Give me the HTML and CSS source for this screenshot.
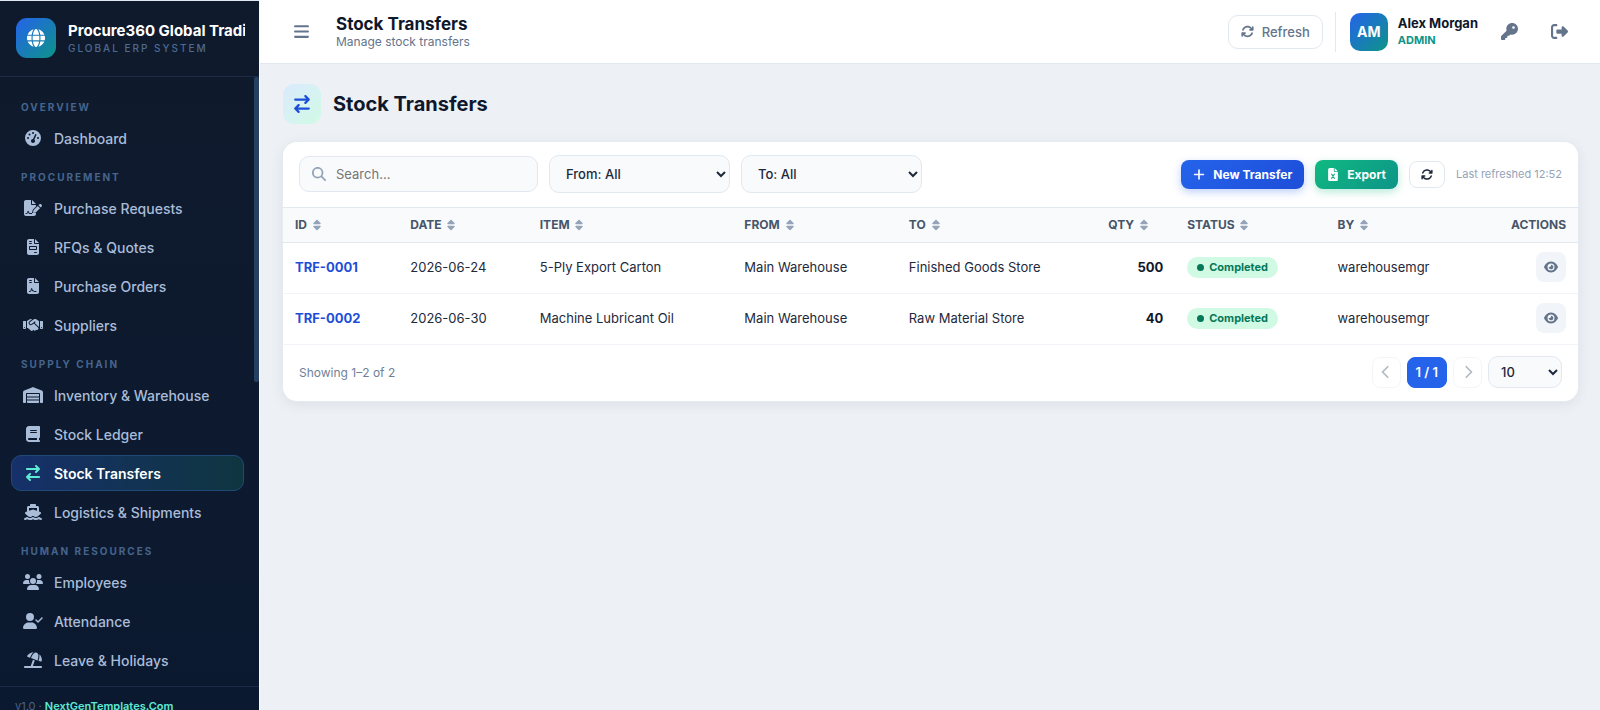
FILE: index.html
```html
<!DOCTYPE html>
<html lang="en">
<head>
    <meta charset="UTF-8">
    <meta name="viewport" content="width=device-width, initial-scale=1.0">
    <title>Stock Transfers</title>
    <link rel="stylesheet" href="styles.css">
</head>
<body>
    <!-- Shared icons -->
    <svg class="sprite" aria-hidden="true">
        <symbol id="i-transfer" viewBox="0 0 448 512"><path d="M438.6 150.6c12.5-12.5 12.5-32.8 0-45.3l-96-96c-12.5-12.5-32.8-12.5-45.3 0s-12.5 32.8 0 45.3L338.7 96 32 96C14.3 96 0 110.3 0 128s14.3 32 32 32l306.7 0-41.4 41.4c-12.5 12.5-12.5 32.8 0 45.3s32.8 12.5 45.3 0l96-96zm-333.3 352c12.5 12.5 32.8 12.5 45.3 0s12.5-32.8 0-45.3L109.3 416 416 416c17.7 0 32-14.3 32-32s-14.3-32-32-32l-306.7 0 41.4-41.4c12.5-12.5 12.5-32.8 0-45.3s-32.8-12.5-45.3 0l-96 96c-12.5 12.5-12.5 32.8 0 45.3l96 96z"/></symbol>
        <symbol id="i-rotate" viewBox="0 0 512 512"><path d="M105.1 202.6c7.7-21.8 20.2-42.3 37.8-59.8c62.5-62.5 163.8-62.5 226.3 0L386.3 160 352 160c-17.7 0-32 14.3-32 32s14.3 32 32 32l111.5 0l.4 0c17.7 0 32-14.3 32-32l0-112c0-17.7-14.3-32-32-32s-32 14.3-32 32l0 35.2L414.4 97.6c-87.5-87.5-229.3-87.5-316.8 0C73.2 122 55.6 150.7 44.8 181.4c-5.9 16.7 2.9 34.9 19.5 40.8s34.9-2.9 40.8-19.5zM39 289.3c-5 1.5-9.8 4.2-13.7 8.2c-4 4-6.7 8.8-8.1 14c-.3 1.2-.6 2.5-.8 3.8c-.3 1.7-.4 3.4-.4 5.1L16 432c0 17.7 14.3 32 32 32s32-14.3 32-32l0-35.1 17.6 17.5c87.5 87.4 229.3 87.4 316.7 0c24.4-24.4 42.1-53.1 52.9-83.8c5.9-16.7-2.9-34.9-19.5-40.8s-34.9 2.9-40.8 19.5c-7.7 21.8-20.2 42.3-37.8 59.8c-62.5 62.5-163.8 62.5-226.3 0l-.1-.1L125.6 352l34.4 0c17.7 0 32-14.3 32-32s-14.3-32-32-32L48.4 288c-1.6 0-3.2 .1-4.8 .3s-3.1 .5-4.6 1z"/></symbol>
        <symbol id="i-sort" viewBox="0 0 320 512"><path d="M137.4 41.4c12.5-12.5 32.8-12.5 45.3 0l128 128c9.2 9.2 11.9 22.9 6.9 34.9s-16.6 19.8-29.6 19.8L32 224c-12.9 0-24.6-7.8-29.6-19.8s-2.2-25.7 6.9-34.9l128-128zm0 429.3l-128-128c-9.2-9.2-11.9-22.9-6.9-34.9s16.6-19.8 29.6-19.8l256 0c12.9 0 24.6 7.8 29.6 19.8s2.2 25.7-6.9 34.9l-128 128c-12.5 12.5-32.8 12.5-45.3 0z"/></symbol>
        <symbol id="i-eye" viewBox="0 0 576 512"><path d="M288 32c-80.8 0-145.5 36.8-192.6 80.6C48.6 156 17.3 208 2.5 243.7c-3.3 7.9-3.3 16.7 0 24.6C17.3 304 48.6 356 95.4 399.4C142.5 443.2 207.2 480 288 480s145.5-36.8 192.6-80.6c46.8-43.5 78.1-95.4 93-131.1c3.3-7.9 3.3-16.7 0-24.6c-14.9-35.7-46.2-87.7-93-131.1C433.5 68.8 368.8 32 288 32zM144 256a144 144 0 1 1 288 0 144 144 0 1 1 -288 0zm144-64c0 35.3-28.7 64-64 64c-7.1 0-13.9-1.2-20.3-3.3c-5.5-1.8-11.9 1.6-11.7 7.4c.3 6.9 1.3 13.8 3.2 20.7c13.7 51.2 66.4 81.6 117.6 67.9s81.6-66.4 67.9-117.6c-11.1-41.5-47.8-69.4-88.6-71.1c-5.8-.2-9.2 6.1-7.4 11.7c2.1 6.4 3.3 13.2 3.3 20.3z"/></symbol>
    </svg>

    <div class="app">
        <aside class="sidebar">
            <div class="brand">
                <div class="brand-logo">
                    <svg class="icon" viewBox="0 0 512 512"><path d="M352 256c0 22.2-1.2 43.6-3.3 64H163.3c-2.2-20.4-3.3-41.8-3.3-64s1.2-43.6 3.3-64H348.7c2.2 20.4 3.3 41.8 3.3 64zm28.8-64H503.9c5.3 20.5 8.1 41.9 8.1 64s-2.8 43.5-8.1 64H380.8c2.1-20.6 3.2-42 3.2-64s-1.1-43.4-3.2-64zm112.6-32H376.7c-10-63.9-29.8-117.4-55.3-151.6c78.3 20.7 142 77.5 171.9 151.6zm-149.1 0H167.7c6.1-36.4 15.5-68.6 27-94.7c10.5-23.6 22.2-40.7 33.5-51.5C239.4 3.2 248.7 0 256 0s16.6 3.2 27.8 13.8c11.3 10.8 23 27.9 33.5 51.5c11.6 26 20.9 58.2 27 94.7zm-209 0H18.6C48.6 85.9 112.2 29.1 190.6 8.4C165.1 42.6 145.3 96.1 135.3 160zM8.1 192H131.2c-2.1 20.6-3.2 42-3.2 64s1.1 43.4 3.2 64H8.1C2.8 299.5 0 278.1 0 256s2.8-43.5 8.1-64zM194.7 446.6c-11.6-26-20.9-58.2-27-94.6H344.3c-6.1 36.4-15.5 68.6-27 94.6c-10.5 23.6-22.2 40.7-33.5 51.5C272.6 508.8 263.3 512 256 512s-16.6-3.2-27.8-13.8c-11.3-10.8-23-27.9-33.5-51.5zM135.3 352c10 63.9 29.8 117.4 55.3 151.6C112.2 482.9 48.6 426.1 18.6 352H135.3zm358.1 0c-30 74.1-93.6 130.9-171.9 151.6c25.5-34.2 45.2-87.7 55.3-151.6H493.4z"/></svg>
                </div>
                <div class="brand-text">
                    <div class="brand-name">Procure360 Global Tradi</div>
                    <div class="brand-sub">GLOBAL ERP SYSTEM</div>
                </div>
            </div>

            <nav class="nav">
                <div class="nav-label">OVERVIEW</div>
                <a href="#" class="nav-item">
                    <svg class="icon" viewBox="0 0 512 512"><path fill-rule="evenodd" d="M0 256a256 256 0 1 1 512 0A256 256 0 1 1 0 256zM288 96a32 32 0 1 0 -64 0 32 32 0 1 0 64 0zM256 416c35.3 0 64-28.7 64-64c0-17.4-6.9-33.1-18.1-44.6L366 161.7c5.3-12.1-.2-26.3-12.3-31.6s-26.3 .2-31.6 12.3L257.9 288c-.6 0-1.3 0-1.9 0c-35.3 0-64 28.7-64 64s28.7 64 64 64zM176 144a32 32 0 1 0 -64 0 32 32 0 1 0 64 0zM96 288a32 32 0 1 0 0-64 32 32 0 1 0 0 64zm352-32a32 32 0 1 0 -64 0 32 32 0 1 0 64 0z"/></svg>
                    Dashboard
                </a>

                <div class="nav-label">PROCUREMENT</div>
                <a href="#" class="nav-item">
                    <svg class="icon" viewBox="0 0 576 512"><path d="M64 0C28.7 0 0 28.7 0 64L0 448c0 35.3 28.7 64 64 64l256 0c35.3 0 64-28.7 64-64l0-32-130 0 28-104L384 205l0-45-128 0c-17.7 0-32-14.3-32-32L224 0 64 0zM256 0l0 128 128 0L256 0zM549.8 139.7c-15.6-15.6-40.9-15.6-56.6 0l-29.4 29.4 71 71 29.4-29.4c15.6-15.6 15.6-40.9 0-56.6l-14.4-14.4zM311.9 321c-4.1 4.1-7 9.2-8.4 14.9l-15 60.1c-1.4 5.5 .2 11.2 4.2 15.2s9.7 5.6 15.2 4.2l60.1-15c5.6-1.4 10.8-4.3 14.9-8.4L512.1 262.7l-71-71L311.9 321z"/><path class="cut" d="M64 432h26c14 0 22-8 26-22l16-54 32 76h80"/></svg>
                    Purchase Requests
                </a>
                <a href="#" class="nav-item">
                    <svg class="icon" viewBox="0 0 384 512"><path fill-rule="evenodd" d="M64 0C28.7 0 0 28.7 0 64L0 448c0 35.3 28.7 64 64 64l256 0c35.3 0 64-28.7 64-64l0-288-128 0c-17.7 0-32-14.3-32-32L224 0 64 0zM256 0l0 128 128 0L256 0zM80 64l64 0c8.8 0 16 7.2 16 16s-7.2 16-16 16L80 96c-8.8 0-16-7.2-16-16s7.2-16 16-16zm0 64l64 0c8.8 0 16 7.2 16 16s-7.2 16-16 16l-64 0c-8.8 0-16-7.2-16-16s7.2-16 16-16zm16 96l192 0c17.7 0 32 14.3 32 32l0 64c0 17.7-14.3 32-32 32L96 352c-17.7 0-32-14.3-32-32l0-64c0-17.7 14.3-32 32-32zm0 32l0 64 192 0 0-64L96 256zM240 416l64 0c8.8 0 16 7.2 16 16s-7.2 16-16 16l-64 0c-8.8 0-16-7.2-16-16s7.2-16 16-16z"/></svg>
                    RFQs &amp; Quotes
                </a>
                <a href="#" class="nav-item">
                    <svg class="icon" viewBox="0 0 384 512"><path fill-rule="evenodd" d="M64 0C28.7 0 0 28.7 0 64L0 448c0 35.3 28.7 64 64 64l256 0c35.3 0 64-28.7 64-64l0-288-128 0c-17.7 0-32-14.3-32-32L224 0 64 0zM256 0l0 128 128 0L256 0zM80 64l64 0c8.8 0 16 7.2 16 16s-7.2 16-16 16L80 96c-8.8 0-16-7.2-16-16s7.2-16 16-16zm0 64l64 0c8.8 0 16 7.2 16 16s-7.2 16-16 16l-64 0c-8.8 0-16-7.2-16-16s7.2-16 16-16z"/><path class="cut" d="M80 432h18c14 0 22-8 26-22l24-76 32 86 18-18c8 18 14 30 30 30h60"/></svg>
                    Purchase Orders
                </a>
                <a href="#" class="nav-item">
                    <svg class="icon" viewBox="0 0 640 512"><path d="M323.4 85.2l-96.8 78.4c-16.1 13-19.2 36.4-7 53.1c12.9 17.8 38 21.3 55.3 7.8l99.3-77.2c7-5.4 17-4.2 22.5 2.8s4.2 17-2.8 22.5l-20.9 16.2L512 316.8 512 128l-.7 0-3.9-2.5L434.8 79c-15.3-9.8-33.2-15-51.4-15c-21.8 0-43 7.5-60 21.2zm22.8 124.4l-51.7 40.2C263 274.3 217.3 268 193.7 235.6c-22.2-30.5-16.6-73.1 12.7-96.8l83.2-67.3c-11.6-4.9-24.1-7.4-36.8-7.4C234 64 215.7 69.6 200 80l-72 48 0 224 28.2 0 91.4 83.4c19.6 17.9 49.9 16.5 67.8-3.1c5.5-6.1 9.2-13.2 11.1-20.6l17 15.6c19.5 17.9 49.9 16.6 67.8-2.9c4.5-4.9 7.8-10.6 9.9-16.5c19.4 13 45.8 10.3 62.1-7.5c17.9-19.5 16.6-49.9-2.9-67.8l-134.2-123zM16 128c-8.8 0-16 7.2-16 16L0 352c0 17.7 14.3 32 32 32l32 0c17.7 0 32-14.3 32-32l0-224-80 0zM48 320a16 16 0 1 1 0 32 16 16 0 1 1 0-32zM544 128l0 224c0 17.7 14.3 32 32 32l32 0c17.7 0 32-14.3 32-32l0-208c0-8.8-7.2-16-16-16l-80 0zm32 208a16 16 0 1 1 32 0 16 16 0 1 1 -32 0z"/></svg>
                    Suppliers
                </a>

                <div class="nav-label">SUPPLY CHAIN</div>
                <a href="#" class="nav-item">
                    <svg class="icon" viewBox="0 0 640 512"><path d="M0 488L0 171.3c0-26.2 15.9-49.7 40.2-59.4L308.1 4.8c7.6-3.1 16.1-3.1 23.8 0L599.8 111.9c24.3 9.7 40.2 33.3 40.2 59.4L640 488c0 13.3-10.7 24-24 24l-48 0c-13.3 0-24-10.7-24-24l0-264c0-17.7-14.3-32-32-32l-384 0c-17.7 0-32 14.3-32 32l0 264c0 13.3-10.7 24-24 24l-48 0c-13.3 0-24-10.7-24-24zm488 24l-336 0c-13.3 0-24-10.7-24-24l0-56 384 0 0 56c0 13.3-10.7 24-24 24zM128 400l0-64 384 0 0 64-384 0zm0-96l0-80 384 0 0 80-384 0z"/></svg>
                    Inventory &amp; Warehouse
                </a>
                <a href="#" class="nav-item">
                    <svg class="icon" viewBox="0 0 448 512"><path fill-rule="evenodd" d="M96 0C43 0 0 43 0 96L0 416c0 53 43 96 96 96l288 0 32 0c17.7 0 32-14.3 32-32s-14.3-32-32-32l0-64c17.7 0 32-14.3 32-32l0-320c0-17.7-14.3-32-32-32L384 0 96 0zm0 384l256 0 0 64L96 448c-17.7 0-32-14.3-32-32s14.3-32 32-32zm32-240c0-8.8 7.2-16 16-16l192 0c8.8 0 16 7.2 16 16s-7.2 16-16 16l-192 0c-8.8 0-16-7.2-16-16zm16 48l192 0c8.8 0 16 7.2 16 16s-7.2 16-16 16l-192 0c-8.8 0-16-7.2-16-16s7.2-16 16-16z"/></svg>
                    Stock Ledger
                </a>
                <a href="#" class="nav-item active">
                    <svg class="icon"><use href="#i-transfer"/></svg>
                    Stock Transfers
                </a>
                <a href="#" class="nav-item">
                    <svg class="icon" viewBox="0 0 576 512"><path fill-rule="evenodd" d="M192 32c0-17.7 14.3-32 32-32L352 0c17.7 0 32 14.3 32 32l0 32 48 0c26.5 0 48 21.5 48 48l0 128 44.4 14.8c23.1 7.7 29.5 37.5 11.5 53.9l-101 92.6c-16.2 9.4-34.7 15.1-50.9 15.1c-19.6 0-40.8-7.7-59.2-20.3c-22.1-15.5-51.6-15.5-73.7 0c-17.1 11.8-38 20.3-59.2 20.3c-16.2 0-34.7-5.7-50.9-15.1l-101-92.6c-18-16.5-11.6-46.2 11.5-53.9L96 240l0-128c0-26.5 21.5-48 48-48l48 0 0-32zM160 218.7l107.8-35.9c13.1-4.4 27.3-4.4 40.5 0L416 218.7l0-90.7-256 0 0 90.7zM306.5 421.9C329 437.4 356.5 448 384 448c26.9 0 55.4-10.8 77.4-26.1c11.9-8.5 28.1-7.8 39.2 1.7c14.4 11.9 32.5 21 50.6 25.2c17.2 4 27.9 21.2 23.9 38.4s-21.2 27.9-38.4 23.9c-24.5-5.7-44.9-16.5-58.2-25C449.5 501.7 417 512 384 512c-31.9 0-60.6-9.9-80.4-18.9c-5.8-2.7-11.1-5.3-15.6-7.7c-4.5 2.4-9.7 5.1-15.6 7.7c-19.8 9-48.5 18.9-80.4 18.9c-33 0-65.5-10.3-94.5-25.8c-13.4 8.4-33.7 19.3-58.2 25c-17.2 4-34.4-6.7-38.4-23.9s6.7-34.4 23.9-38.4c18.1-4.2 36.2-13.3 50.6-25.2c11.1-9.4 27.3-10.1 39.2-1.7C136.7 437.2 165.1 448 192 448c27.5 0 55-10.6 77.5-26.1c11.1-7.9 25.9-7.9 37 0z"/></svg>
                    Logistics &amp; Shipments
                </a>

                <div class="nav-label">HUMAN RESOURCES</div>
                <a href="#" class="nav-item">
                    <svg class="icon" viewBox="0 0 640 512"><path d="M144 0a80 80 0 1 1 0 160A80 80 0 1 1 144 0zM512 0a80 80 0 1 1 0 160A80 80 0 1 1 512 0zM0 298.7C0 239.8 47.8 192 106.7 192l42.7 0c15.9 0 31 3.5 44.6 9.7c-1.3 7.2-1.9 14.7-1.9 22.3c0 38.2 16.8 72.5 43.3 96c-.2 0-.4 0-.7 0L21.3 320C9.6 320 0 310.4 0 298.7zM405.3 320c-.2 0-.4 0-.7 0c26.6-23.5 43.3-57.8 43.3-96c0-7.6-.7-15-1.9-22.3c13.6-6.3 28.7-9.7 44.6-9.7l42.7 0C592.2 192 640 239.8 640 298.7c0 11.8-9.6 21.3-21.3 21.3l-213.3 0zM224 224a96 96 0 1 1 192 0 96 96 0 1 1 -192 0zM128 485.3C128 411.7 187.7 352 261.3 352l117.3 0C452.3 352 512 411.7 512 485.3c0 14.7-11.9 26.7-26.7 26.7l-330.7 0c-14.7 0-26.7-11.9-26.7-26.7z"/></svg>
                    Employees
                </a>
                <a href="#" class="nav-item">
                    <svg class="icon" viewBox="0 0 640 512"><path d="M96 128a128 128 0 1 1 256 0A128 128 0 1 1 96 128zM0 482.3C0 383.8 79.8 304 178.3 304l91.4 0C368.2 304 448 383.8 448 482.3c0 16.4-13.3 29.7-29.7 29.7L29.7 512C13.3 512 0 498.7 0 482.3zM625 177L497 305c-9.4 9.4-24.6 9.4-33.9 0l-64-64c-9.4-9.4-9.4-24.6 0-33.9s24.6-9.4 33.9 0l47 47L591 143c9.4-9.4 24.6-9.4 33.9 0s9.4 24.6 0 33.9z"/></svg>
                    Attendance
                </a>
                <a href="#" class="nav-item">
                    <svg class="icon" viewBox="0 0 576 512"><path d="M346.3 271.8l-60.1-21.9L214 448 32 448c-17.7 0-32 14.3-32 32s14.3 32 32 32l512 0c17.7 0 32-14.3 32-32s-14.3-32-32-32l-261.9 0 64.1-176.2zm121.1-.2l-3.3 9.1 67.7 24.6c18.1 6.6 38-4.2 39.6-23.4c6.5-78.5-23.9-155.5-80.8-208.5c2 8 3.2 16.3 3.4 24.8l.2 6c1.8 57-7.3 113.8-26.8 167.4zM462 99.1c-1.1-34.4-22.5-64.8-54.4-77.4c-.9-.4-1.9-.7-2.8-1.1c-33-11.7-69.8-2.4-93.1 23.8l-4 4.5C272.4 88.3 245 134.2 226.8 184l-3.3 9.1L434 269.7l3.3-9.1c18.1-49.8 26.6-102.5 24.9-155.5l-.2-6zM107.2 112.9c-11.1 15.7-2.8 36.8 15.3 43.4l71 25.8 3.3-9.1c19.5-53.6 49.1-103 87.1-145.5l4-4.5c6.2-6.9 13.1-13 20.5-18.2c-79.6 2.5-154.7 42.2-201.2 108z"/></svg>
                    Leave &amp; Holidays
                </a>
                <div class="nav-thumb"></div>
            </nav>

            <div class="sidebar-footer">v1.0 · <a href="#">NextGenTemplates.Com</a></div>
        </aside>

        <div class="content">
            <header class="topbar">
                <button type="button" class="icon-btn" aria-label="Toggle menu">
                    <svg class="icon" viewBox="0 0 448 512"><path d="M0 96C0 78.3 14.3 64 32 64l384 0c17.7 0 32 14.3 32 32s-14.3 32-32 32L32 128C14.3 128 0 113.7 0 96zM0 256c0-17.7 14.3-32 32-32l384 0c17.7 0 32 14.3 32 32s-14.3 32-32 32L32 288c-17.7 0-32-14.3-32-32zM448 416c0 17.7-14.3 32-32 32L32 448c-17.7 0-32-14.3-32-32s14.3-32 32-32l384 0c17.7 0 32 14.3 32 32z"/></svg>
                </button>
                <div class="topbar-title">
                    <div class="topbar-heading">Stock Transfers</div>
                    <div class="topbar-sub">Manage stock transfers</div>
                </div>
                <button type="button" class="btn-refresh">
                    <svg class="icon"><use href="#i-rotate"/></svg>
                    Refresh
                </button>
                <div class="user">
                    <div class="avatar">AM</div>
                    <div>
                        <div class="user-name">Alex Morgan</div>
                        <div class="user-role">ADMIN</div>
                    </div>
                </div>
                <button type="button" class="icon-btn" aria-label="Change password">
                    <svg class="icon" viewBox="0 0 512 512"><path fill-rule="evenodd" d="M336 352c97.2 0 176-78.8 176-176S433.2 0 336 0S160 78.8 160 176c0 18.7 2.9 36.8 8.3 53.7L7 391c-4.5 4.5-7 10.6-7 17l0 80c0 13.3 10.7 24 24 24l80 0c13.3 0 24-10.7 24-24l0-40 40 0c13.3 0 24-10.7 24-24l0-40 40 0c6.4 0 12.5-2.5 17-7l33.3-33.3c16.9 5.4 35 8.3 53.7 8.3zM376 96a40 40 0 1 1 0 80 40 40 0 1 1 0-80z"/></svg>
                </button>
                <button type="button" class="icon-btn" aria-label="Log out">
                    <svg class="icon" viewBox="0 0 512 512"><path d="M377.9 105.9L500.7 228.7c7.2 7.2 11.3 17.1 11.3 27.3s-4.1 20.1-11.3 27.3L377.9 406.1c-6.4 6.4-15 9.9-24 9.9c-18.7 0-33.9-15.2-33.9-33.9l0-62.1-128 0c-17.7 0-32-14.3-32-32l0-64c0-17.7 14.3-32 32-32l128 0 0-62.1c0-18.7 15.2-33.9 33.9-33.9c9 0 17.6 3.6 24 9.9zM160 96L96 96c-17.7 0-32 14.3-32 32l0 256c0 17.7 14.3 32 32 32l64 0c17.7 0 32 14.3 32 32s-14.3 32-32 32l-64 0c-53 0-96-43-96-96L0 128C0 75 43 32 96 32l64 0c17.7 0 32 14.3 32 32s-14.3 32-32 32z"/></svg>
                </button>
            </header>

            <main class="page">
                <div class="page-header">
                    <div class="page-icon"><svg class="icon"><use href="#i-transfer"/></svg></div>
                    <h1>Stock Transfers</h1>
                </div>

                <section class="card">
                    <div class="toolbar">
                        <label class="search">
                            <svg class="icon" viewBox="0 0 512 512"><path fill-rule="evenodd" d="M416 208c0 45.9-14.9 88.3-40 122.7L502.6 457.4c12.5 12.5 12.5 32.8 0 45.3s-32.8 12.5-45.3 0L330.7 376c-34.4 25.2-76.8 40-122.7 40C93.1 416 0 322.9 0 208S93.1 0 208 0S416 93.1 416 208zM208 352a144 144 0 1 0 0-288 144 144 0 1 0 0 288z"/></svg>
                            <input type="text" placeholder="Search..." aria-label="Search">
                        </label>
                        <select class="filter" aria-label="From warehouse"><option>From: All</option></select>
                        <select class="filter" aria-label="To warehouse"><option>To: All</option></select>
                        <div class="toolbar-actions">
                            <button type="button" class="btn btn-primary">
                                <svg class="icon" viewBox="0 0 448 512"><path d="M256 80c0-17.7-14.3-32-32-32s-32 14.3-32 32l0 144L48 224c-17.7 0-32 14.3-32 32s14.3 32 32 32l144 0 0 144c0 17.7 14.3 32 32 32s32-14.3 32-32l0-144 144 0c17.7 0 32-14.3 32-32s-14.3-32-32-32l-144 0 0-144z"/></svg>
                                New Transfer
                            </button>
                            <button type="button" class="btn btn-success">
                                <svg class="icon" viewBox="0 0 384 512"><path d="M64 0C28.7 0 0 28.7 0 64L0 448c0 35.3 28.7 64 64 64l256 0c35.3 0 64-28.7 64-64l0-288-128 0c-17.7 0-32-14.3-32-32L224 0 64 0zM256 0l0 128 128 0L256 0z"/><path class="cut" d="M136 240l112 168M248 240L136 408"/></svg>
                                Export
                            </button>
                            <button type="button" class="btn btn-outline" aria-label="Reload table">
                                <svg class="icon"><use href="#i-rotate"/></svg>
                            </button>
                            <span class="refreshed">Last refreshed 12:52</span>
                        </div>
                    </div>

                    <table class="table">
                        <colgroup>
                            <col class="col-id"><col class="col-date"><col class="col-item"><col class="col-from"><col class="col-to"><col class="col-qty"><col class="col-status"><col class="col-by"><col>
                        </colgroup>
                        <thead>
                            <tr>
                                <th>ID <svg class="icon"><use href="#i-sort"/></svg></th>
                                <th>DATE <svg class="icon"><use href="#i-sort"/></svg></th>
                                <th>ITEM <svg class="icon"><use href="#i-sort"/></svg></th>
                                <th>FROM <svg class="icon"><use href="#i-sort"/></svg></th>
                                <th>TO <svg class="icon"><use href="#i-sort"/></svg></th>
                                <th>QTY <svg class="icon"><use href="#i-sort"/></svg></th>
                                <th>STATUS <svg class="icon"><use href="#i-sort"/></svg></th>
                                <th>BY <svg class="icon"><use href="#i-sort"/></svg></th>
                                <th class="actions">ACTIONS</th>
                            </tr>
                        </thead>
                        <tbody>
                            <tr>
                                <td class="ref">TRF-0001</td>
                                <td>2026-06-24</td>
                                <td>5-Ply Export Carton</td>
                                <td>Main Warehouse</td>
                                <td>Finished Goods Store</td>
                                <td class="qty">500</td>
                                <td><span class="badge">Completed</span></td>
                                <td>warehousemgr</td>
                                <td class="actions"><button type="button" class="view-btn" aria-label="View TRF-0001"><svg class="icon"><use href="#i-eye"/></svg></button></td>
                            </tr>
                            <tr>
                                <td class="ref">TRF-0002</td>
                                <td>2026-06-30</td>
                                <td>Machine Lubricant Oil</td>
                                <td>Main Warehouse</td>
                                <td>Raw Material Store</td>
                                <td class="qty">40</td>
                                <td><span class="badge">Completed</span></td>
                                <td>warehousemgr</td>
                                <td class="actions"><button type="button" class="view-btn" aria-label="View TRF-0002"><svg class="icon"><use href="#i-eye"/></svg></button></td>
                            </tr>
                        </tbody>
                    </table>

                    <div class="card-footer">
                        <span class="showing">Showing 1–2 of 2</span>
                        <div class="pager">
                            <button type="button" class="page-btn" disabled aria-label="Previous page">
                                <svg class="icon" viewBox="0 0 320 512"><path d="M9.4 233.4c-12.5 12.5-12.5 32.8 0 45.3l192 192c12.5 12.5 32.8 12.5 45.3 0s12.5-32.8 0-45.3L77.3 256 246.6 86.6c12.5-12.5 12.5-32.8 0-45.3s-32.8-12.5-45.3 0l-192 192z"/></svg>
                            </button>
                            <button type="button" class="page-btn current">1 / 1</button>
                            <button type="button" class="page-btn" disabled aria-label="Next page">
                                <svg class="icon" viewBox="0 0 320 512"><path d="M310.6 233.4c12.5 12.5 12.5 32.8 0 45.3l-192 192c-12.5 12.5-32.8 12.5-45.3 0s-12.5-32.8 0-45.3L242.7 256 73.4 86.6c-12.5-12.5-12.5-32.8 0-45.3s32.8-12.5 45.3 0l192 192z"/></svg>
                            </button>
                            <select class="page-size" aria-label="Rows per page"><option>10</option></select>
                        </div>
                    </div>
                </section>
            </main>
        </div>
    </div>
</body>
</html>
```

FILE: styles.css
```css
* {
    box-sizing: border-box;
}
body {
    margin: 0;
    font-family: Inter, "Liberation Sans", sans-serif;
    font-size: 14px;
    color: #1e293b;
    background-color: #edf0f5;
    height: 100vh;
    overflow: hidden;
}
button, input, select {
    font-family: inherit;
    margin: 0;
}
button {
    cursor: pointer;
}
.sprite {
    display: none;
}
.icon {
    width: 16px;
    height: 16px;
    fill: currentColor;
    flex: none;
}
.cut {
    fill: none;
    stroke: #0d1a2e;
    stroke-width: 32px;
    stroke-linecap: round;
    stroke-linejoin: round;
}
.app {
    display: flex;
    align-items: flex-start;
}

/* Sidebar */
.sidebar {
    display: flex;
    flex-direction: column;
    width: 260px;
    flex: none;
    height: calc(100vh + 16px);
    background: linear-gradient(180deg, #0f1a2c, #0b1930);
    border-top: 1px solid #e2e8f0;
    border-right: 1px solid #f8fafc;
}
.brand {
    display: flex;
    align-items: center;
    gap: 12px;
    padding: 17px 14px 18px 16px;
    border-bottom: 1px solid #1d2c46;
}
.brand-logo {
    display: flex;
    align-items: center;
    justify-content: center;
    width: 40px;
    height: 40px;
    flex: none;
    border-radius: 11px;
    color: #fff;
    background: linear-gradient(135deg, #2563eb, #0d9488);
}
.brand-logo .icon {
    width: 18px;
    height: 18px;
}
.brand-text {
    min-width: 0;
    overflow: hidden;
    white-space: nowrap;
}
.brand-name {
    font-size: 15px;
    font-weight: 700;
    line-height: 20px;
    color: #fff;
}
.brand-sub {
    font-size: 10px;
    font-weight: 500;
    line-height: 14px;
    letter-spacing: 2px;
    color: #4d6a92;
}
.nav {
    position: relative;
    flex: 1;
    display: flex;
    flex-direction: column;
    gap: 3px;
    padding: 20px 15px 0 11px;
}
.nav-label {
    padding: 0 10px;
    font-size: 10px;
    font-weight: 700;
    line-height: 20px;
    letter-spacing: 2px;
    color: #46648c;
}
.nav-item + .nav-label {
    margin-top: 8px;
}
.nav-item {
    display: flex;
    align-items: center;
    gap: 11px;
    height: 36px;
    flex: none;
    padding: 0 11px;
    border: 1px solid transparent;
    border-radius: 10px;
    font-size: 14px;
    font-weight: 500;
    color: #a9bcd8;
    text-decoration: none;
}
.nav-item .icon {
    width: 20px;
}
.nav-item.active {
    color: #fff;
    font-weight: 600;
    border-color: #1f4a77;
    background: linear-gradient(90deg, #16306a, #0f3540);
}
.nav-item.active .icon {
    color: #5eead4;
}
.nav-thumb {
    position: absolute;
    top: 0;
    right: 0;
    width: 5px;
    height: 50%;
    border-radius: 2px;
    background-color: #264061;
}
.sidebar-footer {
    padding: 12px 15px;
    border-top: 1px solid #1d2c46;
    font-size: 11px;
    line-height: 15px;
    color: #4d6285;
}
.sidebar-footer a {
    color: #5eead4;
    font-weight: 600;
    text-decoration: none;
}

/* Top bar */
.content {
    flex: 1;
    min-width: 0;
}
.topbar {
    display: flex;
    align-items: center;
    gap: 12px;
    height: 64px;
    padding: 0 22px;
    background-color: #fff;
    border-bottom: 1px solid #e2e8f0;
}
.icon-btn {
    display: flex;
    align-items: center;
    justify-content: center;
    width: 38px;
    height: 38px;
    padding: 0;
    border: none;
    background: none;
    color: #64748b;
}
.icon-btn .icon {
    width: 17px;
    height: 17px;
}
.topbar-title {
    margin-right: auto;
    padding: 1px 0 0 4px;
}
.topbar-heading {
    font-size: 17px;
    font-weight: 700;
    line-height: 20px;
    color: #0f172a;
}
.topbar-sub {
    font-size: 12px;
    line-height: 16px;
    color: #64748b;
}
.btn-refresh {
    display: flex;
    align-items: center;
    gap: 8px;
    height: 34px;
    padding: 0 12px;
    border: 1px solid #e2e8f0;
    border-radius: 10px;
    background-color: #fff;
    color: #64748b;
    font-size: 13px;
    font-weight: 500;
}
.btn-refresh .icon {
    width: 13px;
    height: 13px;
}
.user {
    display: flex;
    align-items: center;
    gap: 10px;
    height: 40px;
    padding-left: 14px;
    border-left: 1px solid #e2e8f0;
}
.avatar {
    display: flex;
    align-items: center;
    justify-content: center;
    width: 38px;
    height: 38px;
    border-radius: 10px;
    color: #fff;
    font-weight: 700;
    background: linear-gradient(135deg, #2563eb, #0d9488);
}
.user-name {
    font-size: 13px;
    font-weight: 700;
    line-height: 17px;
    color: #0f172a;
}
.user-role {
    font-size: 11px;
    font-weight: 700;
    line-height: 17px;
    color: #0d9488;
}

/* Page */
.page {
    padding: 20px 22px 22px 23px;
}
.page-header {
    display: flex;
    align-items: center;
    gap: 12px;
    margin-bottom: 18px;
}
.page-header h1 {
    margin: 0;
    font-size: 20px;
    font-weight: 700;
    color: #0f172a;
}
.page-icon {
    display: flex;
    align-items: center;
    justify-content: center;
    width: 38px;
    height: 40px;
    border-radius: 11px;
    color: #1d4ed8;
    background: linear-gradient(135deg, #dbeafe, #d1fae5);
}
.page-icon .icon {
    width: 18px;
    height: 18px;
}
.card {
    border-radius: 14px;
    background-color: #fff;
    box-shadow: 0 0 0 1px #e6ebf2, 0 3px 14px rgba(15, 23, 42, 0.08);
}
.toolbar {
    display: flex;
    align-items: center;
    gap: 11px;
    padding: 13px 16px 14px;
}
.search {
    display: flex;
    align-items: center;
    gap: 10px;
    width: 239px;
    height: 36px;
    padding: 0 12px;
    border: 1px solid #e2e8f0;
    border-radius: 10px;
    background-color: #f8fafc;
    color: #94a3b8;
}
.search .icon {
    width: 14px;
    height: 14px;
}
.search input {
    flex: 1;
    min-width: 0;
    padding: 0;
    border: none;
    outline: none;
    background: none;
    font-size: 13px;
}
.filter, .page-size {
    height: 38px;
    width: 181px;
    padding: 0 12px;
    border: 1px solid #e2e8f0;
    border-radius: 10px;
    background-color: #f8fafc;
    color: #1e293b;
    font-size: 13px;
    font-weight: 500;
}
.toolbar-actions {
    display: flex;
    align-items: center;
    gap: 11px;
    margin-left: auto;
}
.btn {
    display: flex;
    align-items: center;
    gap: 8px;
    height: 29px;
    padding: 0 12px;
    border: none;
    border-radius: 8px;
    color: #fff;
    font-size: 12px;
    font-weight: 700;
}
.btn .icon {
    width: 12px;
    height: 13px;
}
.btn-primary {
    background: linear-gradient(135deg, #2563eb, #1d4ed8);
    box-shadow: 0 3px 9px rgba(37, 99, 235, 0.3);
}
.btn-success {
    background: linear-gradient(135deg, #10b981, #0d9488);
    box-shadow: 0 3px 9px rgba(16, 185, 129, 0.3);
}
.btn-success .cut {
    stroke: #10a985;
    stroke-width: 40px;
}
.btn-outline {
    height: 27px;
    padding: 0 11px;
    border: 1px solid #e2e8f0;
    background-color: #fff;
    color: #1e293b;
}
.refreshed {
    font-size: 11px;
    color: #94a3b8;
}

/* Transfers table */
.table {
    width: 100%;
    table-layout: fixed;
    border-collapse: collapse;
}
.col-id { width: 8.9%; }
.col-date { width: 10%; }
.col-item { width: 15.8%; }
.col-from { width: 12.7%; }
.col-to { width: 15.4%; }
.col-qty { width: 6.1%; }
.col-status { width: 11.6%; }
.col-by { width: 10.5%; }
.table th {
    height: 35px;
    padding: 0 12px 2px;
    border-top: 1px solid #e2e8f0;
    border-bottom: 1px solid #e2e8f0;
    background-color: #f8fafc;
    color: #475569;
    font-size: 12px;
    font-weight: 700;
    text-align: left;
    white-space: nowrap;
}
.table th .icon {
    width: 8px;
    height: 12px;
    margin-left: 3px;
    vertical-align: -2px;
    color: #94a3b8;
}
.table td {
    height: 51px;
    padding: 0 12px 2px;
    border-bottom: 1px solid #f1f5f9;
    font-size: 13px;
    white-space: nowrap;
}
.table .ref {
    color: #1d4ed8;
    font-weight: 700;
}
.table .qty {
    text-align: right;
    font-weight: 700;
    color: #0f172a;
}
.table .actions {
    text-align: right;
}
.badge {
    display: inline-flex;
    align-items: center;
    gap: 5px;
    height: 21px;
    padding: 0 10px;
    border-radius: 11px;
    background-color: #d1fae5;
    color: #047857;
    font-size: 11px;
    font-weight: 700;
}
.badge::before {
    content: "";
    width: 7px;
    height: 7px;
    border-radius: 50%;
    background-color: currentColor;
}
.view-btn {
    display: inline-flex;
    align-items: center;
    justify-content: center;
    width: 30px;
    height: 30px;
    padding: 0;
    border: none;
    border-radius: 8px;
    background-color: #f1f5f9;
    color: #64748b;
    vertical-align: middle;
}
.view-btn .icon {
    width: 14px;
    height: 14px;
}
.card-footer {
    display: flex;
    align-items: center;
    justify-content: space-between;
    padding: 11px 16px 13px;
}
.showing {
    font-size: 12px;
    color: #708197;
}
.pager {
    display: flex;
    align-items: center;
    gap: 6px;
}
.page-btn {
    display: flex;
    align-items: center;
    justify-content: center;
    min-width: 29px;
    height: 31px;
    padding: 0 8px;
    border: 1px solid #e2e8f0;
    border-radius: 8px;
    background-color: #fff;
    color: #475569;
    font-size: 13px;
    font-weight: 600;
}
.page-btn:disabled {
    opacity: 0.4;
}
.page-btn .icon {
    width: 10px;
    height: 14px;
}
.page-btn.current {
    border-color: #2563eb;
    background-color: #2563eb;
    color: #fff;
}
.page-size {
    width: 74px;
    height: 32px;
    padding: 0 8px;
}
```
